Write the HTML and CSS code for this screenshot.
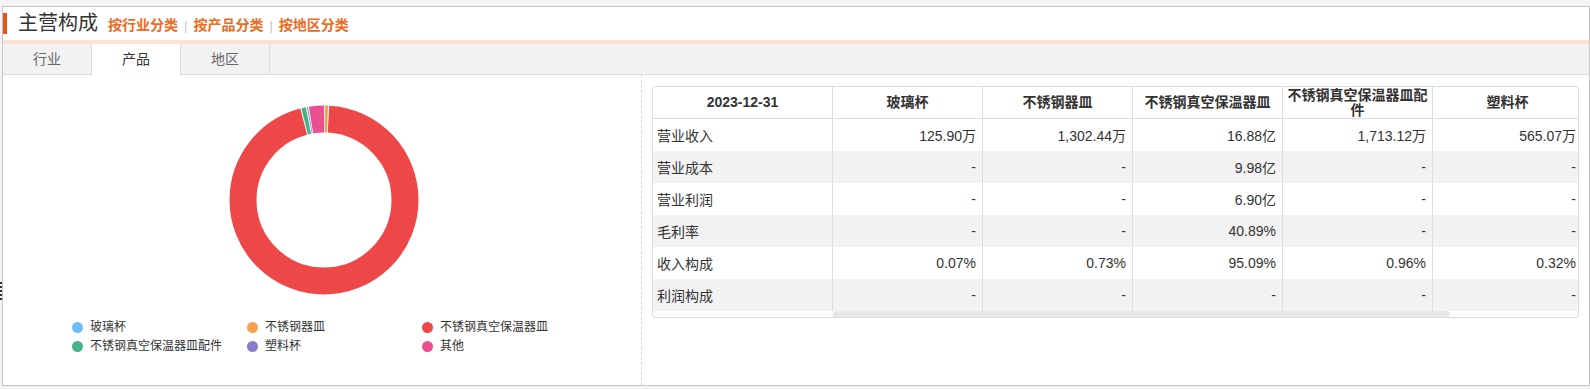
FILE: index.html
```html
<!DOCTYPE html>
<html lang="zh-CN">
<head>
  <meta charset="UTF-8" />
  <meta name="viewport" content="width=device-width, initial-scale=1.0"/>
  <title>主营构成</title>
  <link rel="stylesheet" href="styles.css">
</head>
<body>

<span class="resize-grip"></span>

<div class="panel">
  <div class="panel-head">
    <span class="head-mark"></span>
    <h3 class="head-title">主营构成</h3>
    <a class="head-link" href="#">按行业分类</a><span class="head-sep">|</span>
    <a class="head-link" href="#">按产品分类</a><span class="head-sep">|</span>
    <a class="head-link" href="#">按地区分类</a>
  </div>
  <div class="head-line"></div>

  <ul class="tabs">
    <li>行业</li>
    <li class="active">产品</li>
    <li>地区</li>
  </ul>

  <div class="tab-body">
    <div class="chart-pane">
      <!-- donut: r 81, circumference 508.94, slices in dash lengths -->
      <svg class="chart" width="638" height="243" viewBox="0 0 638 243">
        <g transform="rotate(-90 321 125)" fill="none" stroke-width="27">
          <circle cx="321" cy="125" r="81" stroke="#f9a04f" stroke-dasharray="2.72 600" stroke-dashoffset="-0.86"/>
          <circle cx="321" cy="125" r="81" stroke="#ee4747" stroke-dasharray="482.95 600" stroke-dashoffset="-4.58"/>
          <circle cx="321" cy="125" r="81" stroke="#46b386" stroke-dasharray="3.89 600" stroke-dashoffset="-488.53"/>
          <circle cx="321" cy="125" r="81" stroke="#8a7cc8" stroke-dasharray="0.8 600" stroke-dashoffset="-493.4"/>
          <circle cx="321" cy="125" r="81" stroke="#ec4f8f" stroke-dasharray="13.4 600" stroke-dashoffset="-495.04"/>
        </g>
      </svg>
      <ul class="legend">
        <li><span class="legend-dot" style="background:#6cbdf5"></span>玻璃杯</li>
        <li><span class="legend-dot" style="background:#f9a04f"></span>不锈钢器皿</li>
        <li><span class="legend-dot" style="background:#ee4747"></span>不锈钢真空保温器皿</li>
        <li><span class="legend-dot" style="background:#46b386"></span>不锈钢真空保温器皿配件</li>
        <li><span class="legend-dot" style="background:#8a7cc8"></span>塑料杯</li>
        <li><span class="legend-dot" style="background:#ec4f8f"></span>其他</li>
      </ul>
    </div>

    <div class="table-pane">
      <div class="table-box">
        <div class="table-scroll">
          <table>
            <colgroup>
              <col class="col-name">
              <col><col><col><col><col>
            </colgroup>
            <thead>
              <tr>
                <th>2023-12-31</th>
                <th>玻璃杯</th>
                <th>不锈钢器皿</th>
                <th>不锈钢真空保温器皿</th>
                <th>不锈钢真空保温器皿配件</th>
                <th>塑料杯</th>
              </tr>
            </thead>
            <tbody>
              <tr>
                <td class="row-name">营业收入</td>
                <td>125.90万</td><td>1,302.44万</td><td>16.88亿</td><td>1,713.12万</td><td>565.07万</td>
              </tr>
              <tr>
                <td class="row-name">营业成本</td>
                <td>-</td><td>-</td><td>9.98亿</td><td>-</td><td>-</td>
              </tr>
              <tr>
                <td class="row-name">营业利润</td>
                <td>-</td><td>-</td><td>6.90亿</td><td>-</td><td>-</td>
              </tr>
              <tr>
                <td class="row-name">毛利率</td>
                <td>-</td><td>-</td><td>40.89%</td><td>-</td><td>-</td>
              </tr>
              <tr>
                <td class="row-name">收入构成</td>
                <td>0.07%</td><td>0.73%</td><td>95.09%</td><td>0.96%</td><td>0.32%</td>
              </tr>
              <tr>
                <td class="row-name">利润构成</td>
                <td>-</td><td>-</td><td>-</td><td>-</td><td>-</td>
              </tr>
            </tbody>
          </table>
        </div>
        <div class="scrollbar"><div class="scroll-thumb"></div></div>
      </div>
    </div>
  </div>
</div>

</body>
</html>
```

FILE: styles.css
```css
body {
  font-family: "Liberation Sans", "Noto Sans CJK SC", sans-serif;
  background: #f4f4f4;
  margin: 0;
  padding: 6px 0 0 2px;
  color: #333;
}

.resize-grip {
  position: absolute;
  left: 0;
  top: 282px;
  width: 2px;
  height: 18px;
  background: repeating-linear-gradient(to bottom, #333 0, #333 2px, transparent 2px, transparent 4px);
}

.panel {
  width: 1586px;
  border: 1px solid #c6c6c6;
  background: #fff;
}

.panel-head {
  display: flex;
  align-items: center;
  height: 33px;
}

.head-mark {
  width: 4px;
  height: 21px;
  background: #e8501a;
  margin-right: 11px;
}

.head-title {
  margin: 0 10px 0 0;
  font-size: 20px;
  font-weight: normal;
  line-height: 33px;
  color: #333;
}

.head-link {
  font-size: 14px;
  font-weight: bold;
  color: #ee6a1c;
  text-decoration: none;
}

.head-sep {
  color: #c4c4c4;
  font-size: 13px;
  margin: 3px 6px 0;
}

.head-line {
  height: 4px;
  background: #fde2d1;
}

.tabs {
  display: flex;
  margin: 0;
  padding: 0;
  list-style: none;
  height: 30px;
  background: #f2f2f2;
  border-bottom: 1px solid #ddd;
}

.tabs li {
  width: 88px;
  height: 30px;
  line-height: 30px;
  text-align: center;
  font-size: 14px;
  color: #666;
  border-right: 1px solid #ddd;
}

.tabs li.active {
  background: #fff;
  color: #333;
  height: 31px;
  margin-bottom: -1px;
}

.tab-body {
  display: flex;
  height: 310px;
}

.chart-pane {
  width: 638px;
  flex-shrink: 0;
  border-right: 1px dashed #d6d6d6;
}

.chart {
  display: block;
}

.legend {
  display: grid;
  grid-template-columns: repeat(3, 175px);
  margin: 0 0 0 69px;
  padding: 0;
  list-style: none;
  font-size: 12px;
  color: #333;
}

.legend li {
  display: flex;
  align-items: center;
  height: 19px;
  line-height: 19px;
}

.legend-dot {
  width: 11px;
  height: 11px;
  border-radius: 50%;
  margin-right: 7px;
}

.table-pane {
  flex: 1;
  min-width: 0;
  padding: 11px 10px 0 10px;
}

.table-box {
  width: 925px;
  border: 1px solid #ddd;
  border-radius: 3px;
  overflow: hidden;
}

.table-scroll {
  overflow: hidden;
}

table {
  width: 930px;
  table-layout: fixed;
  border-collapse: separate;
  border-spacing: 0;
  font-size: 14px;
  color: #333;
}

col {
  width: 150px;
}

col.col-name {
  width: 180px;
}

thead tr,
tbody tr {
  height: 32px;
}

th,
td {
  border-right: 1px solid #ddd;
  padding: 0 6px;
  white-space: nowrap;
}

th {
  padding: 0 4px;
  border-bottom: 1px solid #ddd;
  line-height: 15px;
  font-weight: bold;
  text-align: center;
  white-space: normal;
}

td {
  text-align: right;
}

td.row-name {
  text-align: left;
  padding-left: 4px;
}

tbody tr:nth-child(even) td {
  background: #f2f2f2;
}

.scrollbar {
  height: 6px;
  padding-left: 180px;
}

.scroll-thumb {
  width: 617px;
  height: 6px;
  background: #e8e8e8;
  border-radius: 0 3px 3px 0;
}
```
